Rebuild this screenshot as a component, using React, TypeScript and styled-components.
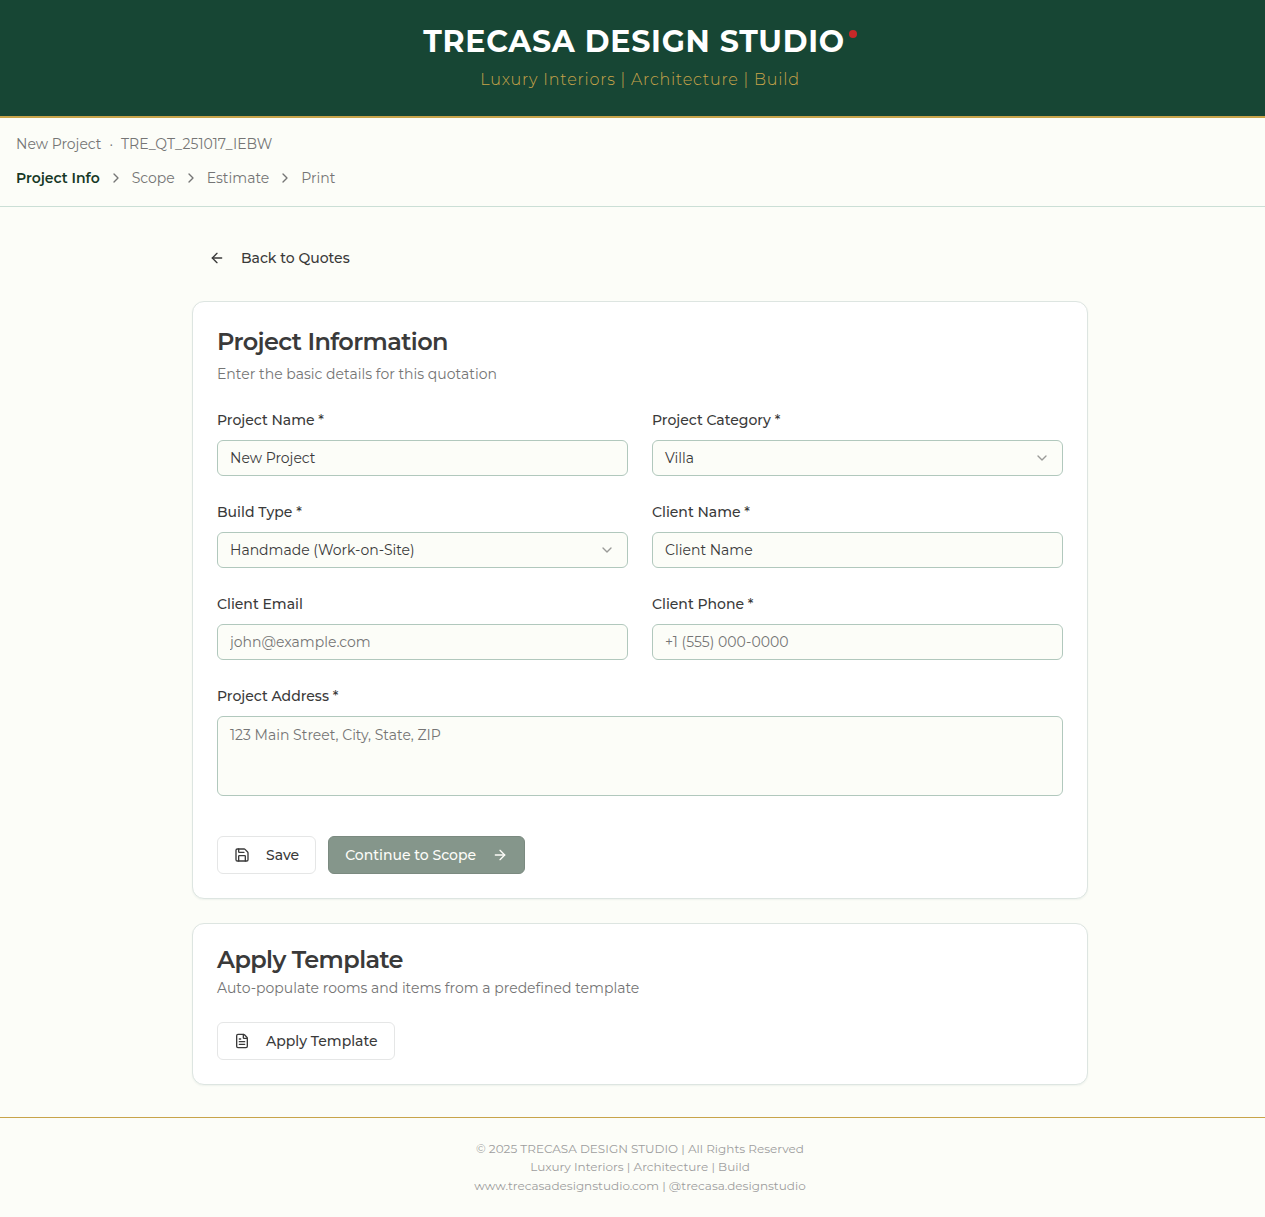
import React from 'react';
import styled, { createGlobalStyle, css } from 'styled-components';
import { ArrowLeft, ArrowRight, ChevronDown, ChevronRight, FileText, Save } from 'lucide-react';

const color = {
  green: '#174634',
  deepGreen: '#163826',
  gold: '#c8a44a',
  page: '#fcfdf8',
  ink: '#3a3a3a',
  muted: '#757575',
};

const GlobalStyle = createGlobalStyle`
  *, *::before, *::after { box-sizing: border-box; }
  html { overflow: hidden; }
  body {
    margin: 0;
    min-width: 1280px;
    background: ${color.page};
    color: ${color.ink};
    font-family: Montserrat, Inter, sans-serif;
    font-size: 14px;
    line-height: 20px;
  }
  h1, h2, p { margin: 0; }
  input, textarea, button { font: inherit; color: inherit; }
`;

const Page = styled.div`
  width: 1280px;
  min-height: 1217px;
  display: flex;
  flex-direction: column;
`;

const Masthead = styled.header`
  height: 118px;
  padding-top: 24px;
  display: flex;
  flex-direction: column;
  align-items: center;
  background: ${color.green};
  border-bottom: 2px solid ${color.gold};
`;

const Brand = styled.h1`
  position: relative;
  font-size: 30px;
  line-height: 36px;
  font-weight: 700;
  letter-spacing: 0.75px;
  color: #fff;
  padding-right: 12px;
`;

const BrandDot = styled.span`
  position: absolute;
  right: 0;
  top: 6px;
  width: 8px;
  height: 8px;
  border-radius: 50%;
  background: #c62828;
`;

const Tagline = styled.p`
  margin-top: 8px;
  font-size: 16px;
  line-height: 24px;
  font-weight: 300;
  letter-spacing: 0.8px;
  color: ${color.gold};
`;

const Progress = styled.div`
  height: 89px;
  padding: 16px;
  display: flex;
  flex-direction: column;
  gap: 14px;
  color: ${color.muted};
  border-bottom: 1px solid #cbdfd6;
`;

const ProgressRow = styled.div`
  display: flex;
  align-items: center;
  gap: 8px;
`;

const Step = styled.span<{ $active?: boolean }>`
  ${(p) => p.$active && css`
    color: ${color.deepGreen};
    font-weight: 600;
  `}
`;

const Main = styled.main`
  width: 896px;
  margin: 0 auto;
  padding: 32px 0;
  display: flex;
  flex-direction: column;
  align-items: stretch;
  gap: 24px;
`;

const Button = styled.button<{ $variant: 'ghost' | 'outline' | 'primary' }>`
  height: 38px;
  padding: 0 16px;
  display: inline-flex;
  align-items: center;
  align-self: flex-start;
  gap: 16px;
  border: 1px solid transparent;
  border-radius: 6px;
  background: transparent;
  font-weight: 500;
  white-space: nowrap;
  ${(p) => p.$variant === 'outline' && css`
    border-color: #e5e6e6;
  `}
  ${(p) => p.$variant === 'primary' && css`
    color: #fdfdf9;
    background: #85968b;
    border-color: #7b8a80;
  `}
`;

const Card = styled.section`
  display: flex;
  flex-direction: column;
  padding: 24px;
  background: #fff;
  border: 1px solid #dde5e1;
  border-radius: 12px;
  box-shadow: 0 1px 2px rgba(24, 71, 53, 0.06);
`;

const CardTitle = styled.h2<{ $tight?: boolean }>`
  font-size: 24px;
  line-height: ${(p) => (p.$tight ? 24 : 32)}px;
  font-weight: 600;
  letter-spacing: -0.6px;
`;

const CardNote = styled.p`
  margin-top: 6px;
  color: ${color.muted};
`;

const Fields = styled.div`
  margin-top: 26px;
  display: grid;
  grid-template-columns: 1fr 1fr;
  gap: 26px 24px;
`;

const Field = styled.label<{ $wide?: boolean }>`
  display: flex;
  flex-direction: column;
  gap: 10px;
  font-weight: 500;
  ${(p) => p.$wide && css`grid-column: 1 / -1;`}
`;

const control = css`
  width: 100%;
  height: 36px;
  padding: 0 12px;
  border: 1px solid #b1c8bd;
  border-radius: 6px;
  background: ${color.page};
  font-weight: 400;
  outline: none;
`;

const Input = styled.input`
  ${control}
  &::placeholder { color: ${color.muted}; opacity: 1; }
`;

const TextArea = styled.textarea`
  ${control}
  display: block;
  height: 80px;
  padding: 8px 12px;
  resize: none;
  &::placeholder { color: ${color.muted}; opacity: 1; }
`;

const Select = styled.div`
  ${control}
  display: flex;
  align-items: center;
  justify-content: space-between;
  svg { opacity: 0.5; }
`;

const Actions = styled.div<{ $top: number }>`
  margin-top: ${(p) => p.$top}px;
  display: flex;
  gap: 12px;
`;

const Footer = styled.footer`
  height: 100px;
  padding-top: 22px;
  border-top: 1px solid ${color.gold};
  text-align: center;
  font-size: 12px;
  line-height: 18.4px;
  color: #9e9e9e;
`;

const steps = ['Project Info', 'Scope', 'Estimate', 'Print'];

export default function App() {
  return (
    <Page>
      <GlobalStyle />
      <Masthead>
        <Brand>TRECASA DESIGN STUDIO<BrandDot /></Brand>
        <Tagline>Luxury Interiors | Architecture | Build</Tagline>
      </Masthead>
      <Progress>
        <ProgressRow>
          <span>New Project</span><span>·</span><span>TRE_QT_251017_IEBW</span>
        </ProgressRow>
        <ProgressRow>
          {steps.map((name, i) => (
            <React.Fragment key={name}>
              {i > 0 && <ChevronRight size={16} />}
              <Step $active={i === 0}>{name}</Step>
            </React.Fragment>
          ))}
        </ProgressRow>
      </Progress>
      <Main>
        <Button $variant="ghost"><ArrowLeft size={16} />Back to Quotes</Button>
        <Card>
          <CardTitle>Project Information</CardTitle>
          <CardNote>Enter the basic details for this quotation</CardNote>
          <Fields>
            <Field>Project Name *<Input defaultValue="New Project" /></Field>
            <Field>Project Category *<Select>Villa<ChevronDown size={16} /></Select></Field>
            <Field>Build Type *<Select>Handmade (Work-on-Site)<ChevronDown size={16} /></Select></Field>
            <Field>Client Name *<Input defaultValue="Client Name" /></Field>
            <Field>Client Email<Input placeholder="john@example.com" /></Field>
            <Field>Client Phone *<Input placeholder="+1 (555) 000-0000" /></Field>
            <Field $wide>Project Address *<TextArea placeholder="123 Main Street, City, State, ZIP" /></Field>
          </Fields>
          <Actions $top={40}>
            <Button $variant="outline"><Save size={16} />Save</Button>
            <Button $variant="primary" disabled>Continue to Scope<ArrowRight size={16} /></Button>
          </Actions>
        </Card>
        <Card>
          <CardTitle $tight>Apply Template</CardTitle>
          <CardNote>Auto-populate rooms and items from a predefined template</CardNote>
          <Actions $top={24}>
            <Button $variant="outline"><FileText size={16} />Apply Template</Button>
          </Actions>
        </Card>
      </Main>
      <Footer>
        <p>© 2025 TRECASA DESIGN STUDIO | All Rights Reserved</p>
        <p>Luxury Interiors | Architecture | Build</p>
        <p>www.trecasadesignstudio.com | @trecasa.designstudio</p>
      </Footer>
    </Page>
  );
}
